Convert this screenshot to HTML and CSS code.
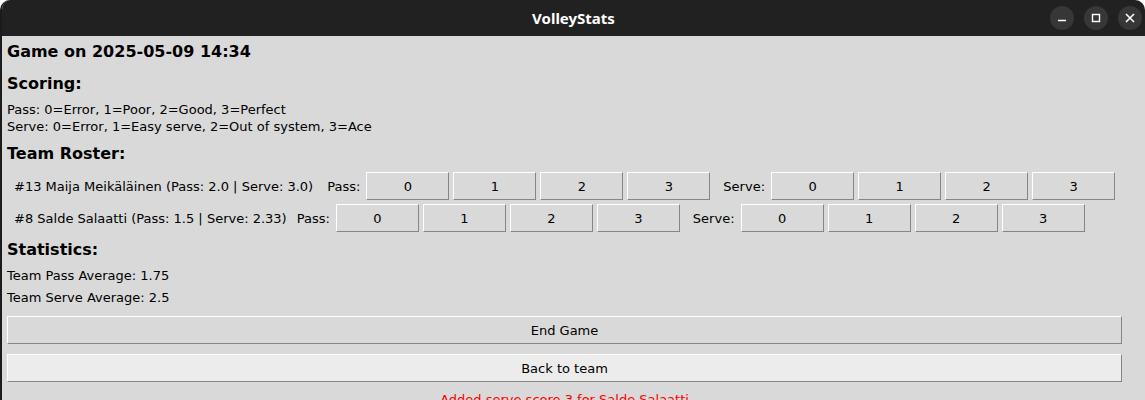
FILE: index.html
```html
<!DOCTYPE html>
<html lang="en">
<head>
<meta charset="utf-8">
<title>VolleyStats</title>
<link rel="stylesheet" href="styles.css">
</head>
<body>
<div class="window">
  <header class="titlebar">
    <div class="spacer"></div>
    <div class="title">VolleyStats</div>
    <div class="controls">
      <span class="ctl"><svg width="24" height="24" viewBox="0 0 24 24"><path d="M8 14.5h8" stroke="#fff" stroke-width="1.6" fill="none"/></svg></span>
      <span class="ctl"><svg width="24" height="24" viewBox="0 0 24 24"><rect x="8.5" y="8.5" width="7" height="7" stroke="#fff" stroke-width="1.4" fill="none"/></svg></span>
      <span class="ctl"><svg width="24" height="24" viewBox="0 0 24 24"><path d="M8 8l8 8M16 8l-8 8" stroke="#fff" stroke-width="1.6" fill="none"/></svg></span>
    </div>
  </header>
  <main class="content">
    <h1 class="heading h-game">Game on 2025-05-09 14:34</h1>
    <h2 class="heading h-scoring">Scoring:</h2>
    <p class="legend">Pass: 0=Error, 1=Poor, 2=Good, 3=Perfect<br>Serve: 0=Error, 1=Easy serve, 2=Out of system, 3=Ace</p>
    <h2 class="heading h-roster">Team Roster:</h2>
    <div class="roster">
      <div class="row">
        <span class="name">#13 Maija Meikäläinen (Pass: 2.0 | Serve: 3.0)</span>
        <span class="lbl lbl-pass">Pass:</span>
        <button class="score">0</button><button class="score">1</button><button class="score">2</button><button class="score">3</button>
        <span class="lbl lbl-serve">Serve:</span>
        <button class="score">0</button><button class="score">1</button><button class="score">2</button><button class="score">3</button>
      </div>
      <div class="row row-tight">
        <span class="name">#8 Salde Salaatti (Pass: 1.5 | Serve: 2.33)</span>
        <span class="lbl lbl-pass">Pass:</span>
        <button class="score">0</button><button class="score">1</button><button class="score">2</button><button class="score">3</button>
        <span class="lbl lbl-serve">Serve:</span>
        <button class="score">0</button><button class="score">1</button><button class="score">2</button><button class="score">3</button>
      </div>
    </div>
    <h2 class="heading h-stats">Statistics:</h2>
    <div class="stats">
      <p class="stat">Team Pass Average: 1.75</p>
      <p class="stat">Team Serve Average: 2.5</p>
    </div>
    <button class="wide end">End Game</button>
    <button class="wide back">Back to team</button>
    <p class="status">Added serve score 3 for Salde Salaatti</p>
  </main>
</div>
</body>
</html>
```
FILE: styles.css
```css
html, body {
  margin: 0;
  padding: 0;
  background: #ffffff;
  overflow: hidden;
}

.window {
  width: 1145px;
  height: 420px;
  background: #d9d9d9;
  border-radius: 10px 10px 0 0;
  overflow: hidden;
  box-sizing: border-box;
  border-left: 2px solid #1b1b1b;
  font-family: "DejaVu Sans", sans-serif;
  color: #000;
}

.titlebar {
  height: 36px;
  background: #212121;
  display: grid;
  grid-template-columns: 1fr auto 1fr;
  align-items: center;
  margin-left: -2px;
}

.title {
  font-family: "Noto Sans", sans-serif;
  font-weight: 700;
  font-size: 15px;
  color: #ffffff;
  padding-left: 2px;
}

.controls {
  display: flex;
  justify-content: flex-end;
  gap: 10px;
  padding-right: 3px;
}

.ctl {
  width: 24px;
  height: 24px;
  border-radius: 50%;
  background: #373737;
  display: block;
}

.ctl svg {
  display: block;
}

.content {
  padding: 6px 0 0 5px;
  width: 1115px;
}

.heading {
  margin: 0;
  font-size: 16px;
  font-weight: 700;
  line-height: 19px;
}

.h-scoring { margin-top: 13px; }
.h-roster { margin-top: 9px; }
.h-stats { margin-top: 6px; }

.legend {
  margin: 8px 0 0;
  font-size: 13px;
  line-height: 17px;
}

.roster {
  margin-top: 7px;
}

.row {
  display: flex;
  align-items: center;
  padding: 2px 0 2px 7px;
  font-size: 13px;
}

.lbl-pass {
  margin-left: 14px;
  margin-right: 6px;
}

.row-tight .lbl-pass {
  margin-left: 10px;
}

.lbl-serve {
  margin-left: 9px;
  margin-right: 6px;
}

button {
  font-family: "DejaVu Sans", sans-serif;
  font-size: 13px;
  color: #000;
  background: #d9d9d9;
  box-sizing: border-box;
  border: 1px solid;
  border-color: #ffffff #868686 #868686 #ffffff;
  padding: 0;
  margin: 0;
  border-radius: 0;
}

.score {
  width: 83px;
  height: 28px;
  margin-right: 4px;
}

.stats {
  margin-top: 6px;
}

.stat {
  margin: 0;
  font-size: 13px;
  line-height: 22px;
}

.wide {
  display: block;
  width: 1115px;
  height: 28px;
}

.end { margin-top: 7px; }
.back { margin-top: 10px; background: #ececec; }

.status {
  margin: 9px 0 0;
  font-size: 13px;
  line-height: 17px;
  color: #ff0000;
  text-align: center;
}
```
